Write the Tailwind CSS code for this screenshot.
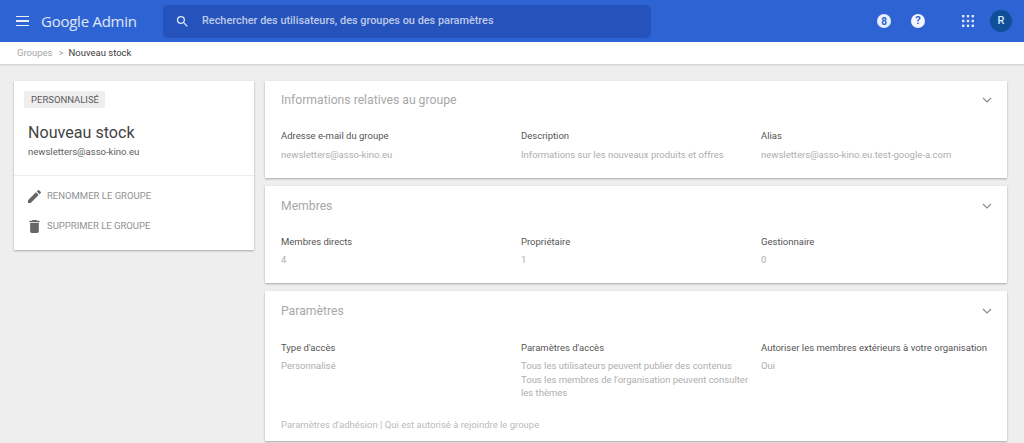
<!DOCTYPE html>
<html lang="fr">
<head>
    <meta charset="UTF-8">
    <meta name="viewport" content="width=device-width, initial-scale=1.0">
    <script src="https://cdn.jsdelivr.net/npm/@tailwindcss/browser@4"></script>
    <title>Google Admin</title>
</head>
<body class="bg-[#eeeeee] font-['Roboto',sans-serif] h-[443px] overflow-hidden">
    <!-- barre du haut -->
    <header class="h-[42px] bg-[#2e63d3] flex items-center text-white">
        <button class="w-[16px] ml-[16px] flex flex-col gap-[3px]">
            <span class="block h-[1.5px] w-[13px] bg-white/90"></span>
            <span class="block h-[1.5px] w-[13px] bg-white/90"></span>
            <span class="block h-[1.5px] w-[13px] bg-white/90"></span>
        </button>
        <div class="ml-[9px] w-[122px] text-[15px] text-white/85 font-['Open_Sans',sans-serif] tracking-[-0.25px]">Google Admin</div>
        <div class="w-[488px] h-[33px] rounded-[5px] bg-[#2553bb] flex items-center">
            <svg class="ml-[12px] w-[15px] h-[15px]" viewBox="0 0 24 24" fill="#dfe8fa"><path d="M15.5 14h-.79l-.28-.27A6.47 6.47 0 0 0 16 9.5 6.5 6.5 0 1 0 9.5 16c1.61 0 3.09-.59 4.23-1.57l.27.28v.79l5 4.99L20.49 19l-4.99-5zm-6 0C7.01 14 5 11.99 5 9.5S7.01 5 9.5 5 14 7.01 14 9.5 11.99 14 9.5 14z"/></svg>
            <span class="ml-[12px] text-[10.9px] font-medium text-white/70">Rechercher des utilisateurs, des groupes ou des paramètres</span>
        </div>
        <div class="ml-auto flex items-center">
            <div class="w-[14px] h-[14px] rounded-full bg-[#e8eefb] text-[#2e63d3] text-[10px] font-bold flex items-center justify-center">8</div>
            <div class="ml-[20px] w-[14px] h-[14px] rounded-full bg-[#f3f6fd] text-[#2e63d3] text-[11px] font-bold flex items-center justify-center">?</div>
            <svg class="ml-[37px] w-[12px] h-[12px]" viewBox="0 0 12 12" fill="#dbe5fa">
                <rect x="0" y="0" width="2.4" height="2.4"/><rect x="4.8" y="0" width="2.4" height="2.4"/><rect x="9.6" y="0" width="2.4" height="2.4"/>
                <rect x="0" y="4.8" width="2.4" height="2.4"/><rect x="4.8" y="4.8" width="2.4" height="2.4"/><rect x="9.6" y="4.8" width="2.4" height="2.4"/>
                <rect x="0" y="9.6" width="2.4" height="2.4"/><rect x="4.8" y="9.6" width="2.4" height="2.4"/><rect x="9.6" y="9.6" width="2.4" height="2.4"/>
            </svg>
            <div class="ml-[16px] mr-[12px] w-[22px] h-[22px] rounded-full bg-[#0f4f98] text-[#dbe8f8] text-[11px] font-medium flex items-center justify-center">R</div>
        </div>
    </header>

    <!-- fil d'ariane -->
    <nav class="h-[22px] bg-white shadow-[0_1px_2px_rgba(0,0,0,0.15)] flex items-center pl-[17px] text-[9.5px]">
        <span class="text-[#a6a6a6]">Groupes</span>
        <span class="text-[#a6a6a6] ml-[6px] mr-[5px]">&gt;</span>
        <span class="text-[#3c3c3c]">Nouveau stock</span>
    </nav>

    <main class="flex items-start gap-[11px] pl-[14px] pt-[17px]">
        <!-- carte de gauche -->
        <aside class="w-[240px] h-[169px] bg-white shadow-[0_1px_2px_rgba(0,0,0,0.3)]">
            <div class="h-[95px] border-b border-[#eeeeee] pl-[10px] pt-[10px]">
                <span class="block w-[81px] h-[17px] leading-[17px] pl-[7px] bg-[#eeeeee] rounded-[2px] text-[9.5px] text-[#5c5c5c]">PERSONNALISÉ</span>
                <h1 class="ml-[4px] mt-[15px] text-[16.1px] leading-[20px] text-[#444444]">Nouveau stock</h1>
                <p class="ml-[4px] mt-[2px] text-[9.5px] leading-[14px] text-[#5c5c5c]">newsletters@asso-kino.eu</p>
            </div>
            <div class="pl-[14px] pt-[11px]">
                <div class="flex items-center h-[18px]">
                    <svg class="w-[13px] h-[13px]" viewBox="3 3 18 18" fill="#666666"><path d="M3 17.25V21h3.75L17.81 9.94l-3.75-3.75L3 17.25zM20.71 7.04a1 1 0 0 0 0-1.41l-2.34-2.34a1 1 0 0 0-1.41 0l-1.83 1.83 3.75 3.75 1.83-1.83z"/></svg>
                    <span class="ml-[6px] text-[9.5px] text-[#929292]">RENOMMER LE GROUPE</span>
                </div>
                <div class="flex items-center h-[18px] mt-[12px]">
                    <svg class="w-[13px] h-[13px]" viewBox="4 3 16 18" fill="#666666"><path d="M6 19c0 1.1.9 2 2 2h8c1.1 0 2-.9 2-2V7H6v12zM19 4h-3.5l-1-1h-5l-1 1H5v2h14V4z"/></svg>
                    <span class="ml-[6px] text-[9.5px] text-[#929292]">SUPPRIMER LE GROUPE</span>
                </div>
            </div>
        </aside>

        <!-- cartes de droite -->
        <section class="w-[742px] flex flex-col gap-[8px]">
            <article class="h-[97px] bg-white shadow-[0_1px_2px_rgba(0,0,0,0.3)] pl-[16px] pr-[14px] pt-[10px]">
                <div class="h-[18px] flex items-center justify-between">
                    <h2 class="text-[12.2px] text-[#a8a8a8]">Informations relatives au groupe</h2>
                    <svg class="w-[12px] h-[12px]" viewBox="0 0 12 12" fill="none" stroke="#888888" stroke-width="1.1"><path d="M2 4l4 4 4-4"/></svg>
                </div>
                <div class="grid grid-cols-[240px_240px_1fr] mt-[20px] text-[9.5px]">
                    <div><p class="leading-[14px] text-[#555555]">Adresse e-mail du groupe</p><p class="mt-[5px] leading-[14px] text-[#aeaeae]">newsletters@asso-kino.eu</p></div>
                    <div><p class="leading-[14px] text-[#555555]">Description</p><p class="mt-[5px] leading-[14px] text-[#aeaeae]">Informations sur les nouveaux produits et offres</p></div>
                    <div><p class="leading-[14px] text-[#555555]">Alias</p><p class="mt-[5px] leading-[14px] text-[#aeaeae]">newsletters@asso-kino.eu.test-google-a.com</p></div>
                </div>
            </article>

            <article class="h-[97px] bg-white shadow-[0_1px_2px_rgba(0,0,0,0.3)] pl-[16px] pr-[14px] pt-[11px]">
                <div class="h-[18px] flex items-center justify-between">
                    <h2 class="text-[12.2px] text-[#a8a8a8]">Membres</h2>
                    <svg class="w-[12px] h-[12px]" viewBox="0 0 12 12" fill="none" stroke="#888888" stroke-width="1.1"><path d="M2 4l4 4 4-4"/></svg>
                </div>
                <div class="grid grid-cols-[240px_240px_1fr] mt-[20px] text-[9.5px]">
                    <div><p class="leading-[14px] text-[#555555]">Membres directs</p><p class="mt-[4px] leading-[14px] text-[#aeaeae]">4</p></div>
                    <div><p class="leading-[14px] text-[#555555]">Propriétaire</p><p class="mt-[4px] leading-[14px] text-[#aeaeae]">1</p></div>
                    <div><p class="leading-[14px] text-[#555555]">Gestionnaire</p><p class="mt-[4px] leading-[14px] text-[#aeaeae]">0</p></div>
                </div>
            </article>

            <article class="h-[150px] bg-white shadow-[0_1px_2px_rgba(0,0,0,0.3)] pl-[16px] pr-[14px] pt-[11px]">
                <div class="h-[18px] flex items-center justify-between">
                    <h2 class="text-[12.2px] text-[#a8a8a8]">Paramètres</h2>
                    <svg class="w-[12px] h-[12px]" viewBox="0 0 12 12" fill="none" stroke="#888888" stroke-width="1.1"><path d="M2 4l4 4 4-4"/></svg>
                </div>
                <div class="grid grid-cols-[240px_240px_1fr] mt-[21px] text-[9.5px]">
                    <div><p class="leading-[14px] text-[#555555]">Type d'accès</p><p class="mt-[4px] leading-[14px] text-[#aeaeae]">Personnalisé</p></div>
                    <div class="pr-[8px]"><p class="leading-[14px] text-[#555555]">Paramètres d'accès</p><p class="mt-[4px] leading-[13.5px] text-[#aeaeae]">Tous les utilisateurs peuvent publier des contenus<br>Tous les membres de l'organisation peuvent consulter les thèmes</p></div>
                    <div><p class="leading-[14px] text-[#555555] whitespace-nowrap">Autoriser les membres extérieurs à votre organisation</p><p class="mt-[4px] leading-[14px] text-[#aeaeae]">Oui</p></div>
                </div>
                <p class="mt-[18px] text-[9.5px] leading-[14px] text-[#bbbbbb]">Paramètres d'adhésion | Qui est autorisé à rejoindre le groupe</p>
            </article>
        </section>
    </main>
</body>
</html>
